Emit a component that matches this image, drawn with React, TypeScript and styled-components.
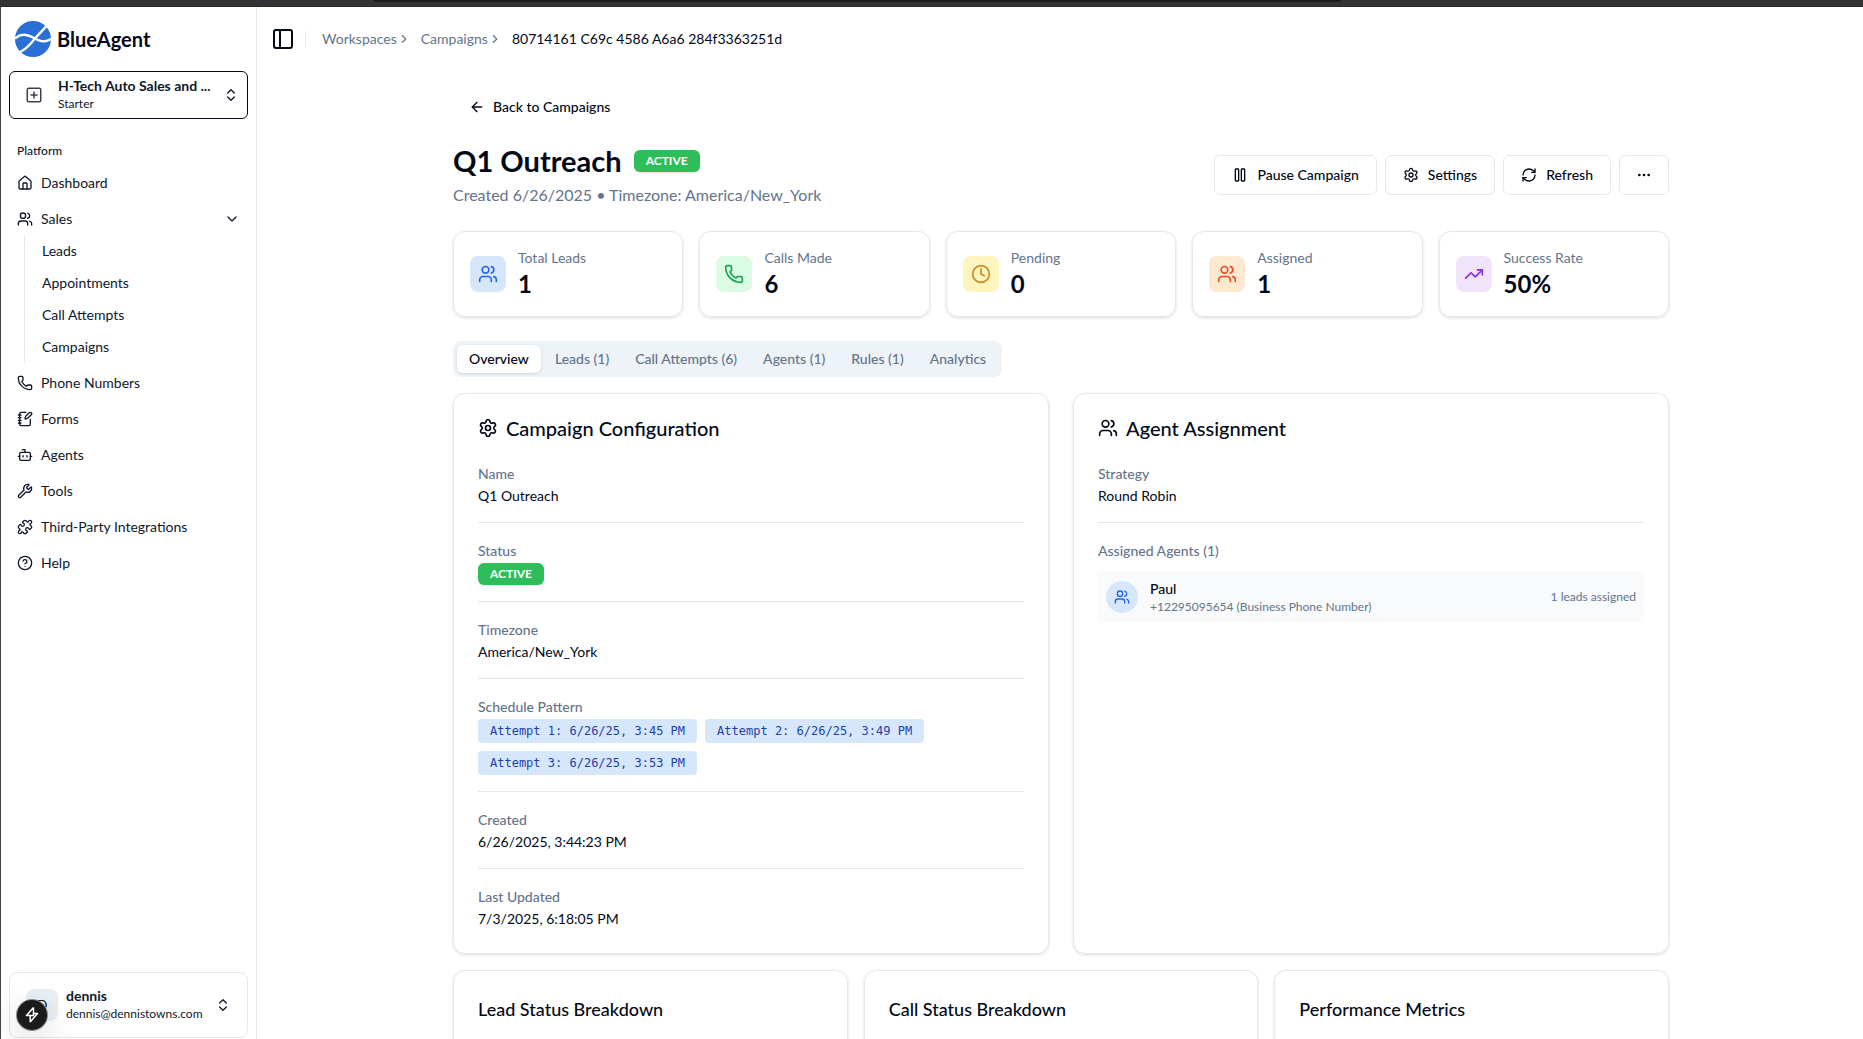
import React from "react";
import styled, { createGlobalStyle, css } from "styled-components";
import {
  ArrowLeft, Bot, ChevronDown, ChevronRight, ChevronsUpDown, CircleQuestionMark, Clock, Ellipsis,
  House, NotebookPen, PanelLeft, Pause, Phone, Puzzle, RefreshCw, Settings, SquarePlus,
  TrendingUp, Users, Wrench,
} from "lucide-react";

const ink = "#020817";
const side = "#0f172a";
const muted = "#64748b";
const line = "#e2e8f0";

const GlobalStyle = createGlobalStyle`
  *, *::before, *::after { box-sizing: border-box; }
  body { margin: 0; background: #fff; color: ${ink}; font: 400 14px/20px Lato, "Liberation Sans", sans-serif; }
  h1, h2, h3, p, ul, ol, dl, dd, dt { margin: 0; padding: 0; font-weight: inherit; }
  ul, ol { list-style: none; }
  a { color: inherit; text-decoration: none; }
  button { font: inherit; color: inherit; background: none; border: 0; padding: 0; cursor: pointer; text-align: left; }
  svg { flex: none; display: block; }
`;

const Window = styled.div`
  height: 100vh;
  display: flex;
  flex-direction: column;
  overflow: hidden;
`;
const TitleStrip = styled.div`
  flex: none;
  height: 7px;
  padding: 0 28% 0 20%;
  background: #333335;
  border-bottom: 1px solid #29292b;
`;
const AddressEdge = styled.div`
  height: 2px;
  background: #1c1c1e;
  border-radius: 0 0 4px 4px;
`;
const Shell = styled.div`
  flex: 1;
  min-height: 0;
  display: flex;
  border-left: 1px solid #46464a;
`;

const Sidebar = styled.aside`
  flex: none;
  width: 256px;
  display: flex;
  flex-direction: column;
  border-right: 1px solid ${line};
  color: ${side};
`;
const Brand = styled.a`
  display: flex;
  align-items: center;
  gap: 6px;
  height: 64px;
  padding-left: 14px;
  color: ${ink};
  font-size: 20px;
  font-weight: 700;
`;
const AccountButton = styled.button<{ $user?: boolean }>`
  display: flex;
  align-items: center;
  gap: 8px;
  margin: 0 8px;
  height: 48px;
  padding: 0 8px 0 15px;
  border: 1px solid ${ink};
  border-radius: 6px;
  ${(p) => p.$user && css`
    height: 66px;
    margin-top: auto;
    margin-bottom: 1px;
    padding: 0 16px;
    border-color: ${line};
    border-radius: 8px;
  `}
`;
const WorkspaceMark = styled.span`
  display: grid;
  place-items: center;
  width: 18px;
  height: 32px;
  margin-right: 7px;
  color: #3f3f50;
`;
const Avatar = styled.span`
  display: grid;
  place-items: center;
  width: 32px;
  height: 32px;
  border-radius: 8px;
  background: #e9f0f5;
`;
const AccountText = styled.span`
  flex: 1;
  min-width: 0;
  display: flex;
  flex-direction: column;
`;
const AccountName = styled.span`
  font-weight: 700;
  line-height: 18px;
  white-space: nowrap;
`;
const AccountNote = styled.span`
  font-size: 12px;
  line-height: 18px;
`;
const DevBadge = styled.button`
  position: absolute;
  left: 17px;
  bottom: 9px;
  width: 30px;
  height: 30px;
  display: grid;
  place-items: center;
  border-radius: 50%;
  background: #1b1b1d;
  box-shadow: 0 0 0 1px #8a8a8c, 0 8px 32px rgba(0, 0, 0, 0.18);
`;

const Nav = styled.nav`
  padding: 16px 8px 8px;
`;
const NavTitle = styled.h2`
  padding: 0 8px;
  font-size: 12px;
  line-height: 32px;
  font-weight: 500;
`;
const NavList = styled.ul`
  display: flex;
  flex-direction: column;
  gap: 4px;
`;
const navItem = css`
  display: flex;
  align-items: center;
  gap: 8px;
  width: 100%;
  height: 32px;
  padding: 0 8px;
`;
const NavLink = styled.a`${navItem}`;
const NavToggle = styled.button`
  ${navItem}
  span { flex: 1; }
`;
const SubList = styled.ul`
  display: flex;
  flex-direction: column;
  gap: 4px;
  margin-left: 15px;
  padding: 2px 0 2px 9px;
  border-left: 1px solid ${line};
`;
const SubLink = styled.a`
  display: block;
  padding: 0 8px;
  line-height: 28px;
`;

const Main = styled.main`
  flex: 1;
  min-width: 0;
  overflow: hidden;
`;
const TopBar = styled.header`
  display: flex;
  align-items: center;
  height: 64px;
  padding-left: 14px;
`;
const BarRule = styled.span`
  width: 1px;
  height: 16px;
  margin: 0 16px 0 10px;
  background: ${line};
`;
const Crumbs = styled.ol`
  display: flex;
  align-items: center;
  gap: 10px;
  color: ${muted};
`;
const Crumb = styled.li<{ $current?: boolean }>`
  display: flex;
  align-items: center;
  color: ${(p) => (p.$current ? ink : muted)};
`;
const Page = styled.div`
  max-width: 1280px;
  margin: 0 auto;
  padding: 16px 31px 16px 33px;
`;
const button = css`
  display: inline-flex;
  align-items: center;
  gap: 8px;
  height: 40px;
  padding: 0 15px;
  border: 1px solid transparent;
  border-radius: 6px;
  font-weight: 500;
`;
const BackLink = styled.a`${button}`;
const OutlineButton = styled.button<{ $iconOnly?: boolean }>`
  ${button}
  gap: 9px;
  padding: 0 ${(p) => (p.$iconOnly ? 16 : 17)}px;
  border-color: ${line};
`;
const Heading = styled.div`
  display: flex;
  align-items: center;
  justify-content: space-between;
  margin: 16px 0 24px;
`;
const TitleRow = styled.div`
  display: flex;
  align-items: center;
  gap: 12px;
  margin-bottom: 4px;
`;
const Title = styled.h1`
  font-size: 29px;
  line-height: 36px;
  font-weight: 700;
`;
const Subtitle = styled.p`
  font-size: 16px;
  line-height: 24px;
  color: ${muted};
`;
const Badge = styled.span`
  display: inline-block;
  padding: 0 12px;
  border-radius: 6px;
  background: #2dbe5a;
  box-shadow: 0 1px 2px rgba(0, 0, 0, 0.12);
  color: #fff;
  font-size: 12px;
  line-height: 22px;
  font-weight: 700;
`;
const Actions = styled.div`
  display: flex;
  gap: 8px;
`;

const card = css`
  border: 1px solid ${line};
  border-radius: 12px;
  box-shadow: 0 1px 3px rgba(15, 23, 42, 0.15);
`;
const Stats = styled.ul`
  display: grid;
  grid-template-columns: repeat(5, 1fr);
  gap: 16px;
`;
const Stat = styled.li`
  ${card}
  display: flex;
  align-items: center;
  gap: 12px;
  padding: 16px;
`;
const StatIcon = styled.span<{ $bg: string; $fg: string }>`
  display: grid;
  place-items: center;
  width: 36px;
  height: 36px;
  border-radius: 8px;
  background: ${(p) => p.$bg};
  color: ${(p) => p.$fg};
`;
const StatLabel = styled.p`color: ${muted};`;
const StatValue = styled.p`
  font-size: 24px;
  line-height: 32px;
  font-weight: 700;
`;

const Tabs = styled.div`
  display: inline-flex;
  gap: 2px;
  margin: 24px 0 16px;
  padding: 4px;
  border-radius: 8px;
  background: #edf3f8;
  vertical-align: top;
`;
const Tab = styled.button<{ $on?: boolean }>`
  height: 28px;
  padding: 0 12px;
  border-radius: 6px;
  font-weight: 500;
  color: ${(p) => (p.$on ? ink : muted)};
  background: ${(p) => (p.$on ? "#fff" : "transparent")};
  box-shadow: ${(p) => (p.$on ? "0 1px 3px rgba(15, 23, 42, 0.14)" : "none")};
`;

const Columns = styled.div<{ $n: number; $gap: number }>`
  display: grid;
  grid-template-columns: repeat(${(p) => p.$n}, 1fr);
  gap: ${(p) => p.$gap}px;
  margin-bottom: 16px;
`;
const Card = styled.section`
  ${card}
  padding: 24px;
`;
const CardTitle = styled.h2`
  display: flex;
  align-items: center;
  gap: 8px;
  margin-bottom: 24px;
  font-size: 20px;
  line-height: 20px;
  font-weight: 500;
`;
const SmallTitle = styled.h3`
  height: 140px;
  font-size: 18px;
  line-height: 28px;
  font-weight: 500;
`;
const Field = styled.div`
  & + & {
    margin-top: 16px;
    padding-top: 16px;
    border-top: 1px solid ${line};
  }
`;
const Term = styled.dt`
  line-height: 24px;
  font-weight: 500;
  color: ${muted};
`;
const Value = styled.dd`
  display: flex;
  flex-wrap: wrap;
  gap: 8px;
`;
const Chip = styled.span`
  padding: 0 12px;
  border-radius: 4px;
  background: #d6e7fc;
  color: #1e40af;
  font: 12px/24px "DejaVu Sans Mono", monospace;
`;
const Agent = styled.dd`
  display: flex;
  align-items: center;
  gap: 12px;
  margin-top: 8px;
  padding: 8px;
  border-radius: 4px;
  background: #f8fafc;
`;
const AgentIcon = styled.span`
  display: grid;
  place-items: center;
  width: 32px;
  height: 32px;
  border-radius: 50%;
  background: #d6e7fc;
  color: #2563eb;
`;
const AgentText = styled.div`
  flex: 1;
  font-weight: 500;
`;
const Fine = styled.p`
  font-size: 12px;
  line-height: 16px;
  font-weight: 400;
  color: ${muted};
`;

const Logo = () => (
  <svg width="36" height="36" viewBox="0 0 36 36" fill="none" aria-hidden="true">
    <circle cx="18" cy="18" r="18" fill="#2a6fd8" />
    <path d="M0 17.500C5 13 11 12.500 18 16.500S30 22 36 18" stroke="#fff" strokeWidth="2.400" />
    <path d="M5 31C13 27 16 22 20 17.500S27 10 32 4.500" stroke="#fff" strokeWidth="2.400" />
  </svg>
);
const Bolt = () => (
  <svg width="18" height="18" viewBox="0 0 18 18" fill="none" stroke="#fff" strokeWidth="1.500" strokeLinejoin="round" aria-hidden="true">
    <path d="M10.500 1.500 3.500 9.500h3.700v6.500M10.500 1.500v6h4L7.200 16" />
    <path d="M7.200 9.500h3.300v-2" />
  </svg>
);

const stats = [
  { label: "Total Leads", value: "1", Icon: Users, bg: "#d6e7fc", fg: "#2563eb" },
  { label: "Calls Made", value: "6", Icon: Phone, bg: "#dafbe4", fg: "#16a34a" },
  { label: "Pending", value: "0", Icon: Clock, bg: "#fdf5bd", fg: "#ca8a22" },
  { label: "Assigned", value: "1", Icon: Users, bg: "#fde8d0", fg: "#ea4a2a" },
  { label: "Success Rate", value: "50%", Icon: TrendingUp, bg: "#f0e4fd", fg: "#8b2fe0" },
];
const tools = [
  { label: "Phone Numbers", Icon: Phone },
  { label: "Forms", Icon: NotebookPen },
  { label: "Agents", Icon: Bot },
  { label: "Tools", Icon: Wrench },
  { label: "Third-Party Integrations", Icon: Puzzle },
  { label: "Help", Icon: CircleQuestionMark },
];
const tabs = ["Overview", "Leads (1)", "Call Attempts (6)", "Agents (1)", "Rules (1)", "Analytics"];
const attempts = ["Attempt 1: 6/26/25, 3:45 PM", "Attempt 2: 6/26/25, 3:49 PM", "Attempt 3: 6/26/25, 3:53 PM"];

export default function App() {
  return (
    <Window>
      <GlobalStyle />
      <TitleStrip><AddressEdge /></TitleStrip>
      <Shell>
        <Sidebar>
          <Brand href="#"><Logo />BlueAgent</Brand>
          <AccountButton>
            <WorkspaceMark><SquarePlus size={18} /></WorkspaceMark>
            <AccountText>
              <AccountName>H-Tech Auto Sales and ...</AccountName>
              <AccountNote>Starter</AccountNote>
            </AccountText>
            <ChevronsUpDown size={16} />
          </AccountButton>
          <Nav>
            <NavTitle>Platform</NavTitle>
            <NavList>
              <li><NavLink href="#"><House size={16} />Dashboard</NavLink></li>
              <li>
                <NavToggle aria-expanded="true"><Users size={16} /><span>Sales</span><ChevronDown size={16} /></NavToggle>
                <SubList>
                  {["Leads", "Appointments", "Call Attempts", "Campaigns"].map((t) => (
                    <li key={t}><SubLink href="#">{t}</SubLink></li>
                  ))}
                </SubList>
              </li>
              {tools.map(({ label, Icon }) => (
                <li key={label}><NavLink href="#"><Icon size={16} />{label}</NavLink></li>
              ))}
            </NavList>
          </Nav>
          <AccountButton $user>
            <Avatar>D</Avatar>
            <AccountText>
              <AccountName>dennis</AccountName>
              <AccountNote>dennis@dennistowns.com</AccountNote>
            </AccountText>
            <ChevronsUpDown size={16} />
          </AccountButton>
          <DevBadge aria-label="Developer tools"><Bolt /></DevBadge>
        </Sidebar>
        <Main>
          <TopBar>
            <button aria-label="Toggle sidebar"><PanelLeft size={24} /></button>
            <BarRule />
            <nav aria-label="Breadcrumb">
              <Crumbs>
                <Crumb><a href="#">Workspaces</a><ChevronRight size={14} /></Crumb>
                <Crumb><a href="#">Campaigns</a><ChevronRight size={14} /></Crumb>
                <Crumb $current>80714161 C69c 4586 A6a6 284f3363251d</Crumb>
              </Crumbs>
            </nav>
          </TopBar>
          <Page>
            <BackLink href="#"><ArrowLeft size={16} />Back to Campaigns</BackLink>
            <Heading>
              <div>
                <TitleRow><Title>Q1 Outreach</Title><Badge>ACTIVE</Badge></TitleRow>
                <Subtitle>Created 6/26/2025 • Timezone: America/New_York</Subtitle>
              </div>
              <Actions>
                <OutlineButton><Pause size={16} />Pause Campaign</OutlineButton>
                <OutlineButton><Settings size={16} />Settings</OutlineButton>
                <OutlineButton><RefreshCw size={16} />Refresh</OutlineButton>
                <OutlineButton $iconOnly aria-label="More"><Ellipsis size={16} /></OutlineButton>
              </Actions>
            </Heading>
            <Stats>
              {stats.map(({ label, value, Icon, bg, fg }) => (
                <Stat key={label}>
                  <StatIcon $bg={bg} $fg={fg}><Icon size={20} /></StatIcon>
                  <div><StatLabel>{label}</StatLabel><StatValue>{value}</StatValue></div>
                </Stat>
              ))}
            </Stats>
            <Tabs role="tablist">
              {tabs.map((t, i) => <Tab key={t} role="tab" aria-selected={i === 0} $on={i === 0}>{t}</Tab>)}
            </Tabs>
            <Columns $n={2} $gap={24}>
              <Card>
                <CardTitle><Settings size={20} />Campaign Configuration</CardTitle>
                <dl>
                  <Field><Term>Name</Term><Value>Q1 Outreach</Value></Field>
                  <Field><Term>Status</Term><Value><Badge>ACTIVE</Badge></Value></Field>
                  <Field><Term>Timezone</Term><Value>America/New_York</Value></Field>
                  <Field><Term>Schedule Pattern</Term><Value>{attempts.map((a) => <Chip key={a}>{a}</Chip>)}</Value></Field>
                  <Field><Term>Created</Term><Value>6/26/2025, 3:44:23 PM</Value></Field>
                  <Field><Term>Last Updated</Term><Value>7/3/2025, 6:18:05 PM</Value></Field>
                </dl>
              </Card>
              <Card>
                <CardTitle><Users size={20} />Agent Assignment</CardTitle>
                <dl>
                  <Field><Term>Strategy</Term><Value>Round Robin</Value></Field>
                  <Field>
                    <Term>Assigned Agents (1)</Term>
                    <Agent>
                      <AgentIcon><Users size={16} /></AgentIcon>
                      <AgentText>Paul<Fine>+12295095654 (Business Phone Number)</Fine></AgentText>
                      <Fine>1 leads assigned</Fine>
                    </Agent>
                  </Field>
                </dl>
              </Card>
            </Columns>
            <Columns $n={3} $gap={16}>
              {["Lead Status Breakdown", "Call Status Breakdown", "Performance Metrics"].map((t) => (
                <Card key={t}><SmallTitle>{t}</SmallTitle></Card>
              ))}
            </Columns>
          </Page>
        </Main>
      </Shell>
    </Window>
  );
}
